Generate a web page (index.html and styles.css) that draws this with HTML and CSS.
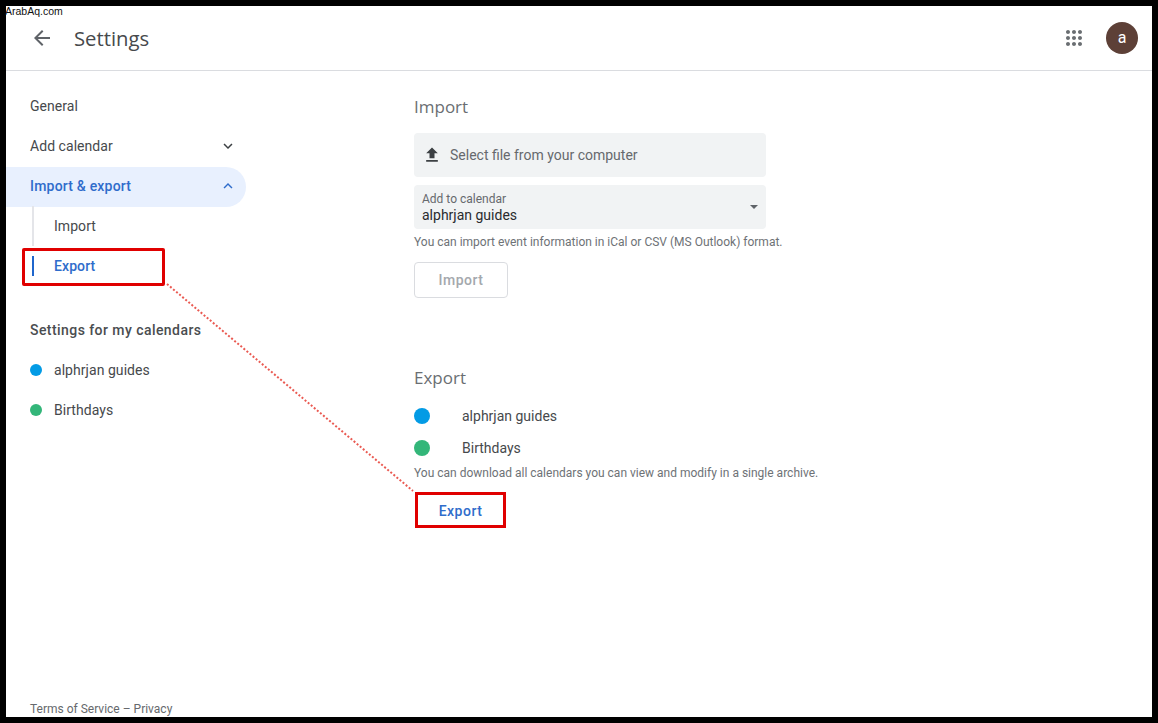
FILE: index.html
```html
<!DOCTYPE html>
<html lang="en">
<head>
<meta charset="utf-8">
<title>Settings</title>
<link rel="stylesheet" href="styles.css">
</head>
<body>
<div class="frame">
  <header class="topbar">
    <svg class="back" viewBox="0 0 24 24" width="24" height="24"><path d="M20 11H7.83l5.59-5.59L12 4l-8 8 8 8 1.41-1.41L7.83 13H20z"/></svg>
    <h1 class="title">Settings</h1>
    <svg class="apps" viewBox="0 0 24 24" width="24" height="24"><path d="M6 8c1.1 0 2-.9 2-2s-.9-2-2-2-2 .9-2 2 .9 2 2 2zm6 12c1.1 0 2-.9 2-2s-.9-2-2-2-2 .9-2 2 .9 2 2 2zm-6 0c1.1 0 2-.9 2-2s-.9-2-2-2-2 .9-2 2 .9 2 2 2zm0-6c1.1 0 2-.9 2-2s-.9-2-2-2-2 .9-2 2 .9 2 2 2zm6 0c1.1 0 2-.9 2-2s-.9-2-2-2-2 .9-2 2 .9 2 2 2zm4-8c0 1.1.9 2 2 2s2-.9 2-2-.9-2-2-2-2 .9-2 2zm-4 2c1.1 0 2-.9 2-2s-.9-2-2-2-2 .9-2 2 .9 2 2 2zm6 6c1.1 0 2-.9 2-2s-.9-2-2-2-2 .9-2 2 .9 2 2 2zm0 6c1.1 0 2-.9 2-2s-.9-2-2-2-2 .9-2 2 .9 2 2 2z"/></svg>
    <div class="avatar">a</div>
  </header>
  <div class="content">
    <nav class="sidebar">
      <div class="nav-item">General</div>
      <div class="nav-item">Add calendar
        <svg class="chev" viewBox="0 0 24 24" width="18" height="18"><path d="M7.41 8.59 12 13.17l4.59-4.58L18 10l-6 6-6-6z"/></svg>
      </div>
      <div class="nav-item nav-active">Import &amp; export
        <svg class="chev" viewBox="0 0 24 24" width="18" height="18"><path d="M7.41 15.41 12 10.83l4.59 4.58L18 14l-6-6-6 6z"/></svg>
      </div>
      <div class="sub-item">Import</div>
      <div class="sub-item sub-active">Export</div>
      <div class="nav-heading">Settings for my calendars</div>
      <div class="cal-item"><span class="dot dot-small dot-blue"></span>alphrjan guides</div>
      <div class="cal-item"><span class="dot dot-small dot-green"></span>Birthdays</div>
      <div class="terms">Terms of Service – Privacy</div>
    </nav>
    <main class="main">
      <section class="import">
        <h2 class="section-title">Import</h2>
        <div class="field file-field">
          <svg class="upload" viewBox="0 0 24 24" width="20" height="20"><path d="M5 20h14v-2H5v2zM5 10h4v6h6v-6h4l-7-7-7 7z"/></svg>
          Select file from your computer
        </div>
        <div class="field select-field">
          <div class="select-text">
            <div class="select-label">Add to calendar</div>
            <div class="select-value">alphrjan guides</div>
          </div>
          <span class="caret"></span>
        </div>
        <p class="help help-import">You can import event information in iCal or CSV (MS Outlook) format.</p>
        <button class="btn btn-disabled">Import</button>
      </section>
      <section class="export">
        <h2 class="section-title">Export</h2>
        <div class="export-row"><span class="dot dot-blue"></span>alphrjan guides</div>
        <div class="export-row"><span class="dot dot-green"></span>Birthdays</div>
        <p class="help help-export">You can download all calendars you can view and modify in a single archive.</p>
        <button class="btn btn-export">Export</button>
      </section>
    </main>
  </div>
</div>
<div class="watermark">ArabAq.com</div>
<div class="mark mark-nav"></div>
<div class="mark mark-btn"></div>
<svg class="leader" width="1158" height="723" viewBox="0 0 1158 723"><line x1="167" y1="284" x2="413" y2="491"/></svg>
</body>
</html>
```
FILE: styles.css
```css
* { box-sizing: border-box; }
html, body { height: 100%; }
body {
  margin: 0;
  background: #000;
  padding: 6px 6px 6px 6px;
  font-family: Roboto, "Liberation Sans", sans-serif;
  color: #46494c;
  overflow: hidden;
}
.frame {
  height: 711px;
  background: #fff;
  display: flex;
  flex-direction: column;
  overflow: hidden;
}
.topbar {
  height: 65px;
  flex: none;
  display: flex;
  align-items: center;
  border-bottom: 1px solid #dadce0;
  padding: 0 14px 1px 24px;
}
.back { fill: #5f6368; margin-right: 20px; }
.title {
  margin: 0;
  font: 400 20.3px/28px "Open Sans", Roboto, sans-serif;
  color: #46494c;
  flex: 1;
}
.apps { fill: #6a6e72; margin-right: 20px; }
.avatar {
  width: 32px;
  height: 32px;
  border-radius: 50%;
  background: #5d4037;
  color: #fff;
  font-size: 16px;
  display: flex;
  align-items: center;
  justify-content: center;
}
.content { flex: 1; display: flex; min-height: 0; }
.sidebar {
  width: 240px;
  flex: none;
  padding-top: 15px;
  display: flex;
  flex-direction: column;
  font-size: 14px;
  letter-spacing: .05px;
}
.nav-item {
  height: 40px;
  flex: none;
  display: flex;
  align-items: center;
  justify-content: space-between;
  padding: 0 9px 0 24px;
  color: #46494c;
}
.chev { fill: #3c4043; }
.nav-active {
  background: #e8f0fe;
  border-radius: 0 20px 20px 0;
  color: #2f6ccb;
  font-weight: 500;
  letter-spacing: .2px;
  margin: 1px 0 -1px;
  padding-bottom: 2px;
}
.nav-active .chev { fill: #2f6ccb; }
.sub-item {
  height: 40px;
  flex: none;
  margin-left: 26px;
  padding-left: 20px;
  display: flex;
  align-items: center;
  border-left: 2px solid #e4e5e9;
}
.sub-active {
  color: #2f6ccb;
  font-weight: 500;
  position: relative;
  border-left-color: #fff;
  letter-spacing: .1px;
}
.sub-active::before {
  content: "";
  position: absolute;
  left: -2px;
  top: 10px;
  width: 2px;
  height: 20px;
  background: #1f66cc;
}
.nav-heading {
  margin-top: 24px;
  height: 40px;
  flex: none;
  display: flex;
  align-items: center;
  padding-left: 24px;
  font-weight: 500;
  font-size: 14px;
  letter-spacing: .44px;
  color: #4a4d50;
}
.cal-item {
  height: 40px;
  flex: none;
  display: flex;
  align-items: center;
  padding-left: 24px;
}
.dot {
  width: 16px;
  height: 16px;
  border-radius: 50%;
  flex: none;
  margin-right: 32px;
}
.dot-small { width: 12px; height: 12px; margin-right: 12px; }
.dot-blue { background: #039be5; }
.dot-green { background: #33b679; }
.terms {
  margin-top: auto;
  padding-left: 24px;
  font-size: 12px;
  line-height: 16px;
  letter-spacing: 0;
  color: #66696d;
}
.main { flex: 1; padding: 24px 0 0 168px; }
.section-title {
  margin: 0;
  font: 400 17px/24px "Open Sans", Roboto, sans-serif;
  color: #6a6e72;
}
.field {
  width: 352px;
  height: 44px;
  background: #f1f3f4;
  border-radius: 4px;
  display: flex;
  align-items: center;
}
.file-field {
  margin-top: 14px;
  padding-left: 8px;
  font-size: 14px;
  color: #66696d;
}
.upload { fill: #3c4043; margin-right: 8px; }
.select-field { margin-top: 8px; padding: 0 8px; justify-content: space-between; }
.select-label { font-size: 12px; line-height: 14px; color: #66696d; }
.select-value { font-size: 14px; line-height: 16px; color: #2a2b2e; margin-top: 1px; }
.caret {
  width: 0;
  height: 0;
  border-left: 4px solid transparent;
  border-right: 4px solid transparent;
  border-top: 4px solid #5f6368;
}
.help { margin: 0; font-size: 12px; line-height: 16px; color: #6e7276; }
.help-import { margin-top: 5px; }
.btn {
  display: block;
  height: 36px;
  border-radius: 4px;
  background: #fff;
  font: 500 14px/20px Roboto, sans-serif;
  letter-spacing: .5px;
  padding: 0;
}
.btn-disabled {
  width: 94px;
  margin-top: 12px;
  border: 1px solid #dadce0;
  color: #a4a8ad;
}
.export { margin-top: 68px; }
.export-row {
  height: 32px;
  display: flex;
  align-items: center;
  font-size: 14px;
  color: #46494c;
}
.export .section-title + .export-row { margin-top: 10px; }
.help-export { margin-top: 1px; }
.btn-export {
  width: 93px;
  margin-top: 11px;
  padding-top: 1px;
  border: 0;
  color: #2f6ccb;
}
.watermark {
  position: absolute;
  left: 5px;
  top: 5px;
  color: #111;
  font: 10.5px/12px "Liberation Sans", sans-serif;
}
.mark {
  position: absolute;
  border: 3px solid #e00000;
}
.mark-nav { left: 22px; top: 248px; width: 143px; height: 38px; border-radius: 2px; }
.mark-btn { left: 415px; top: 492px; width: 91px; height: 36px; }
.leader { position: absolute; left: 0; top: 0; pointer-events: none; }
.leader line { stroke: #ea5a52; stroke-width: 2; stroke-dasharray: 2 2; }
```
